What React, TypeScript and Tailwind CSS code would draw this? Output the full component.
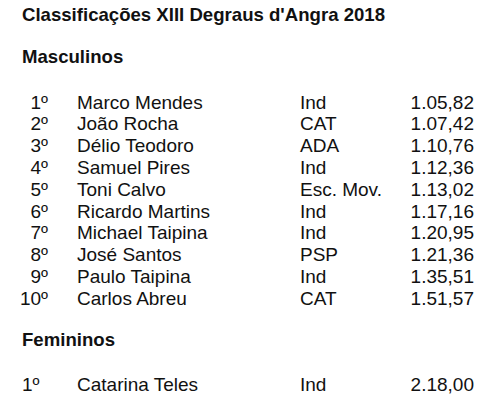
const masculinos = [
  ['1º', 'Marco Mendes', 'Ind', '1.05,82'],
  ['2º', 'João Rocha', 'CAT', '1.07,42'],
  ['3º', 'Délio Teodoro', 'ADA', '1.10,76'],
  ['4º', 'Samuel Pires', 'Ind', '1.12,36'],
  ['5º', 'Toni Calvo', 'Esc. Mov.', '1.13,02'],
  ['6º', 'Ricardo Martins', 'Ind', '1.17,16'],
  ['7º', 'Michael Taipina', 'Ind', '1.20,95'],
  ['8º', 'José Santos', 'PSP', '1.21,36'],
  ['9º', 'Paulo Taipina', 'Ind', '1.35,51'],
  ['10º', 'Carlos Abreu', 'CAT', '1.51,57'],
];

function Row({ row, left }: { row: string[]; left?: boolean }) {
  return (
    <div className="grid grid-cols-[77px_223px_100px_74px] text-[19px] leading-[21.8px]">
      {left ? (
        <div className="pl-[22px]">{row[0]}</div>
      ) : (
        <div className="pr-[29px] text-right">{row[0]}</div>
      )}
      <div>{row[1]}</div>
      <div>{row[2]}</div>
      <div className="text-right">{row[3]}</div>
    </div>
  );
}

export default function App() {
  return (
    <div className="h-[402px] w-[500px] bg-white pt-[4px] font-['Liberation_Sans',Arial,sans-serif] text-[18.6px] text-[#111]">
      <h1 className="pl-[22px] font-bold leading-[21.8px]">Classificações XIII Degraus d'Angra 2018</h1>
      <h2 className="mt-[20px] pl-[22px] font-bold leading-[21.8px]">Masculinos</h2>
      <div className="mt-[24px]">
        {masculinos.map((r) => (
          <Row key={r[0]} row={r} />
        ))}
      </div>
      <h2 className="mt-[19px] pl-[22px] font-bold leading-[21.8px]">Femininos</h2>
      <div className="mt-[24px]">
        <Row row={['1º', 'Catarina Teles', 'Ind', '2.18,00']} left />
      </div>
    </div>
  );
}
